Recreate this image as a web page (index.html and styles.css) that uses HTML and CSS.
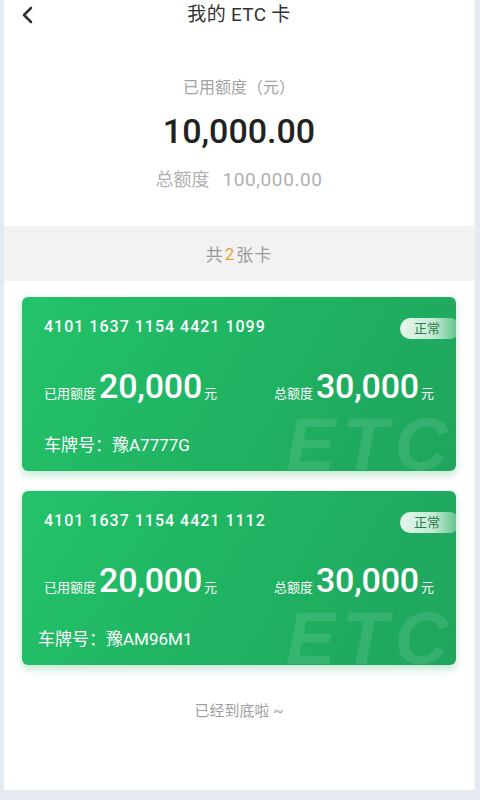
FILE: index.html
```html
<!DOCTYPE html>
<html lang="zh-CN">
<head>
<meta charset="utf-8">
<title>我的 ETC 卡</title>
<link rel="stylesheet" href="styles.css">
</head>
<body>
<div class="panel">
  <header class="topbar">
    <span class="back">
      <svg width="14" height="18" viewBox="0 0 14 18"><path d="M11 2 L4 9 L11 16" fill="none" stroke="#333" stroke-width="2.6" stroke-linecap="round" stroke-linejoin="round"/></svg>
    </span>
    <h1 class="title">我的 ETC 卡</h1>
  </header>

  <section class="summary">
    <div class="sum-label">已用额度（元）</div>
    <div class="sum-value">10,000.00</div>
    <div class="sum-total"><span class="sum-total-label">总额度</span><span class="sum-total-num">100,000.00</span></div>
  </section>

  <div class="band">共<span class="count">2</span>张卡</div>

  <div class="cards">
    <div class="card">
      <div class="card-no">4101 1637 1154 4421 1099</div>
      <div class="badge">正常</div>
      <div class="amounts">
        <div class="amt"><span class="amt-label">已用额度</span><span class="amt-num">20,000</span><span class="amt-unit">元</span></div>
        <div class="amt"><span class="amt-label">总额度</span><span class="amt-num">30,000</span><span class="amt-unit">元</span></div>
      </div>
      <div class="plate">车牌号：豫A7777G</div>
      <div class="watermark">ETC</div>
    </div>
    <div class="card">
      <div class="card-no">4101 1637 1154 4421 1112</div>
      <div class="badge">正常</div>
      <div class="amounts">
        <div class="amt"><span class="amt-label">已用额度</span><span class="amt-num">20,000</span><span class="amt-unit">元</span></div>
        <div class="amt"><span class="amt-label">总额度</span><span class="amt-num">30,000</span><span class="amt-unit">元</span></div>
      </div>
      <div class="plate plate-shift">车牌号：豫AM96M1</div>
      <div class="watermark">ETC</div>
    </div>
  </div>

  <div class="end">已经到底啦 ~</div>
</div>
</body>
</html>
```

FILE: styles.css
```css
* { box-sizing: border-box; }
html, body { margin: 0; padding: 0; }
body {
  background: #e5e9f0;
  font-family: Roboto, "Noto Sans CJK SC", "Noto Sans", sans-serif;
  width: 480px;
  height: 800px;
  overflow: hidden;
}
.panel {
  margin: 0 5px 0 4px;
  height: 790px;
  background: #fff;
  overflow: hidden;
  border-right: 1px solid #f3f5f8;
}
.topbar {
  position: relative;
  height: 30px;
  display: flex;
  align-items: center;
  justify-content: center;
}
.back {
  position: absolute;
  left: 16px;
  top: 6px;
  display: flex;
}
.title {
  margin: 0;
  font-size: 19px;
  font-weight: 400;
  color: #333;
  line-height: 30px;
  letter-spacing: 0.3px;
}
.summary {
  padding: 47px 0 34px;
  text-align: center;
}
.sum-label {
  font-size: 16px;
  line-height: 22px;
  color: #a3a3a3;
}
.sum-value {
  margin-top: 12px;
  font-size: 34px;
  line-height: 40px;
  font-weight: 500;
  color: #222;
}
.sum-total {
  margin-top: 17px;
  font-size: 18px;
  line-height: 24px;
  color: #b0b0b0;
}
.sum-total-label { margin-right: 13px; }
.sum-total-num { font-size: 19px; letter-spacing: 0.6px; }
.band {
  height: 55px;
  background: #f2f2f2;
  display: flex;
  align-items: center;
  justify-content: center;
  font-size: 17px;
  color: #9a9a9a;
  letter-spacing: 1px;
}
.count { color: #e6a33a; margin: 0 1px; }
.cards {
  padding: 16px 18px 0 18px;
  display: flex;
  flex-direction: column;
  gap: 20px;
}
.card {
  position: relative;
  height: 174px;
  border-radius: 6px;
  overflow: hidden;
  padding: 20px 22px 0;
  color: #fff;
  background: linear-gradient(120deg, #24c36a 0%, #20b463 45%, #1fa55d 100%);
  box-shadow: 0 4px 9px rgba(30, 170, 90, 0.28);
}
.card-no {
  font-size: 16px;
  line-height: 20px;
  font-weight: 500;
  letter-spacing: 1px;
}
.badge {
  position: absolute;
  right: -4px;
  top: 21px;
  width: 60px;
  height: 21px;
  border-radius: 11px;
  padding-left: 14px;
  font-size: 13px;
  line-height: 21px;
  color: #2b7a4c;
  background: linear-gradient(90deg, rgba(240, 250, 244, 0.95) 0%, rgba(225, 245, 232, 0.85) 55%, rgba(255, 255, 255, 0.25) 100%);
}
.amounts {
  margin-top: 29px;
  display: flex;
  justify-content: space-between;
  height: 40px;
}
.amt {
  display: flex;
  align-items: baseline;
  line-height: 40px;
}
.amt-label { font-size: 13px; margin-right: 3px; }
.amt-num { font-size: 34px; font-weight: 500; letter-spacing: -0.2px; }
.amt-unit { font-size: 13px; margin-left: 2px; }
.plate {
  margin-top: 28px;
  font-size: 17px;
  line-height: 22px;
  position: relative;
  z-index: 1;
}
.plate-shift { margin-left: -6px; }
.watermark {
  position: absolute;
  left: 264px;
  top: 112px;
  font-family: "Liberation Sans", Arial, sans-serif;
  font-size: 74px;
  font-weight: 700;
  font-style: italic;
  line-height: 72px;
  letter-spacing: 7px;
  color: rgba(255, 255, 255, 0.1);
  white-space: nowrap;
}
.end {
  margin-top: 36px;
  text-align: center;
  font-size: 15px;
  line-height: 20px;
  color: #a0a0a0;
}
```
